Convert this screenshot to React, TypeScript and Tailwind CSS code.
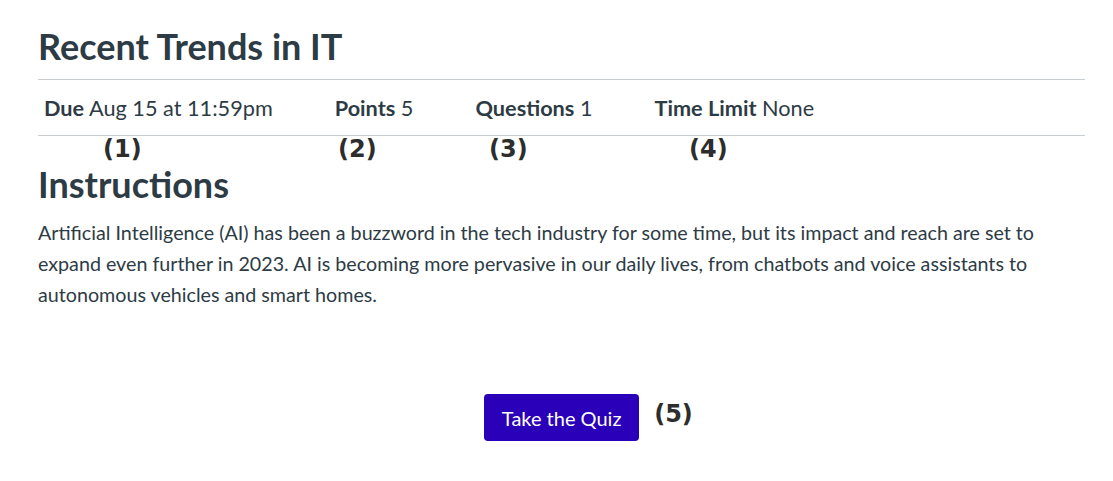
export default function App() {
  const items = [
    { label: "Due", value: "Aug 15 at 11:59pm" },
    { label: "Points", value: "5" },
    { label: "Questions", value: "1" },
    { label: "Time Limit", value: "None" },
  ];
  const ann = "font-['DejaVu_Sans',sans-serif] font-bold text-[24px] text-[#2d2d2d] leading-none";
  return (
    <div className="min-h-[481px] bg-white font-['Lato',sans-serif] text-[#2d3b45] pl-[38px] pr-[28px]">
      <h1 className="pt-[24px] pb-[11px] text-[36px] font-bold leading-[44px]">Recent Trends in IT</h1>
      <div className="border-t border-b border-[#c7cdd1] h-[57px] flex items-center gap-[62px] pl-[6px] pt-[2px] text-[21.7px]">
        {items.map((it) => (
          <div key={it.label} className="whitespace-nowrap">
            <span className="font-bold">{it.label}</span> <span>{it.value}</span>
          </div>
        ))}
      </div>
      <div className="relative h-[26px]">
        <span className={`absolute left-[65px] top-[1px] ${ann}`}>(1)</span>
        <span className={`absolute left-[300px] top-[1px] ${ann}`}>(2)</span>
        <span className={`absolute left-[451px] top-[1px] ${ann}`}>(3)</span>
        <span className={`absolute left-[651px] top-[1px] ${ann}`}>(4)</span>
      </div>
      <h2 className="text-[36px] font-bold leading-[44px]">Instructions</h2>
      <p className="mt-[11px] text-[19.7px] leading-[31px] max-w-[1010px]">
        Artificial Intelligence (AI) has been a buzzword in the tech industry for some time, but its impact and reach are set to expand even further in 2023. AI is becoming more pervasive in our daily lives, from chatbots and voice assistants to autonomous vehicles and smart homes.
      </p>
      <div className="flex justify-center items-center mt-[84px] pl-[54px]">
        <button className="bg-[#2a00b8] text-white text-[20px] rounded-[4px] w-[155px] h-[47px]">Take the Quiz</button>
        <span className={`ml-[15px] -mt-[8px] ${ann}`}>(5)</span>
      </div>
    </div>
  );
}
